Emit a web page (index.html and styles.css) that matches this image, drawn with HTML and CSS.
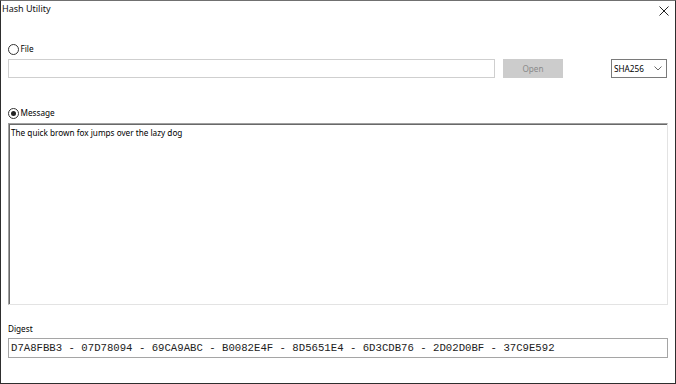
FILE: index.html
```html
<!DOCTYPE html>
<html>
<head>
<meta charset="utf-8">
<title>Hash Utility</title>
<link rel="stylesheet" href="styles.css">
</head>
<body>
<div class="window">
  <div class="titlebar">
    <span class="title">Hash Utility</span>
    <svg class="close" width="10" height="10" viewBox="0 0 10 10"><path d="M0.5 0.5 L9.5 9.5 M9.5 0.5 L0.5 9.5" stroke="#222" stroke-width="1" fill="none"/></svg>
  </div>
  <div class="content">
    <div class="radio-row">
      <span class="radio"></span>
      <span class="radio-label">File</span>
    </div>
    <div class="file-row">
      <div class="textbox"></div>
      <div class="button">Open</div>
      <div class="select">
        <span>SHA256</span>
        <svg class="chev" width="8" height="5" viewBox="0 0 8 5"><path d="M0.5 0.5 L4 4 L7.5 0.5" stroke="#6a6a6a" stroke-width="1" fill="none"/></svg>
      </div>
    </div>
    <div class="radio-row msg">
      <span class="radio checked"></span>
      <span class="radio-label">Message</span>
    </div>
    <div class="textarea">The quick brown fox jumps over the lazy dog</div>
    <div class="label">Digest</div>
    <div class="digest">D7A8FBB3 - 07D78094 - 69CA9ABC - B0082E4F - 8D5651E4 - 6D3CDB76 - 2D02D0BF - 37C9E592</div>
  </div>
</div>
</body>
</html>
```

FILE: styles.css
```css
html, body {
  margin: 0;
  padding: 0;
  background: #fff;
}
.window {
  width: 676px;
  height: 384px;
  box-sizing: border-box;
  border: 1px solid #2e2e2e;
  border-top-color: #707070;
  background: #fff;
  display: flex;
  flex-direction: column;
  font-family: "Noto Sans", "Liberation Sans", sans-serif;
  font-size: 8.2px;
  color: #000;
}
.titlebar {
  height: 22px;
  display: flex;
  justify-content: space-between;
  align-items: flex-start;
}
.title {
  font-size: 9px;
  line-height: 12px;
  margin: 2px 0 0 1px;
  color: #111;
}
.close {
  margin: 5px 6px 0 0;
}
.content {
  padding: 0 7px;
  display: flex;
  flex-direction: column;
}
.radio-row {
  display: flex;
  align-items: center;
  height: 12px;
  margin-top: 20px;
}
.radio-row.msg {
  margin-top: 29px;
}
.radio {
  width: 11px;
  height: 11px;
  box-sizing: border-box;
  border: 1px solid #333;
  border-radius: 50%;
  background: #fff;
  position: relative;
}
.radio.checked::after {
  content: "";
  position: absolute;
  left: 2px;
  top: 2px;
  width: 5px;
  height: 5px;
  border-radius: 50%;
  background: #222;
}
.radio-label {
  margin-left: 1.5px;
  line-height: 12px;
}
.file-row {
  display: flex;
  align-items: flex-start;
  margin-top: 4px;
  height: 19px;
}
.textbox {
  width: 487px;
  height: 19px;
  box-sizing: border-box;
  border: 1px solid #cfcfcf;
  background: #fff;
}
.button {
  width: 60px;
  height: 19px;
  margin-left: 8px;
  background: #cccccc;
  color: #8a8a8a;
  display: flex;
  align-items: center;
  justify-content: center;
}
.select {
  margin-left: auto;
  margin-right: 1px;
  width: 56px;
  height: 19px;
  box-sizing: border-box;
  border: 1px solid #7a7a7a;
  background: #fff;
  display: flex;
  align-items: center;
  justify-content: space-between;
  padding: 0 4px 0 2px;
}
.textarea {
  margin-top: 4px;
  height: 182px;
  box-sizing: border-box;
  border-top: 1px solid #a0a0a0;
  border-left: 1px solid #a0a0a0;
  border-right: 1px solid #e3e3e3;
  border-bottom: 1px solid #e3e3e3;
  box-shadow: inset 1px 1px 0 #696969;
  padding: 3px 2px;
  line-height: 12px;
}
.label {
  margin-top: 18px;
  line-height: 12px;
}
.digest {
  margin-top: 3px;
  height: 20px;
  box-sizing: border-box;
  border: 1px solid #a5a5a5;
  font-family: "Liberation Mono", "Courier New", monospace;
  font-size: 10.67px;
  line-height: 18px;
  padding-left: 2px;
  color: #222;
  white-space: nowrap;
}
```
